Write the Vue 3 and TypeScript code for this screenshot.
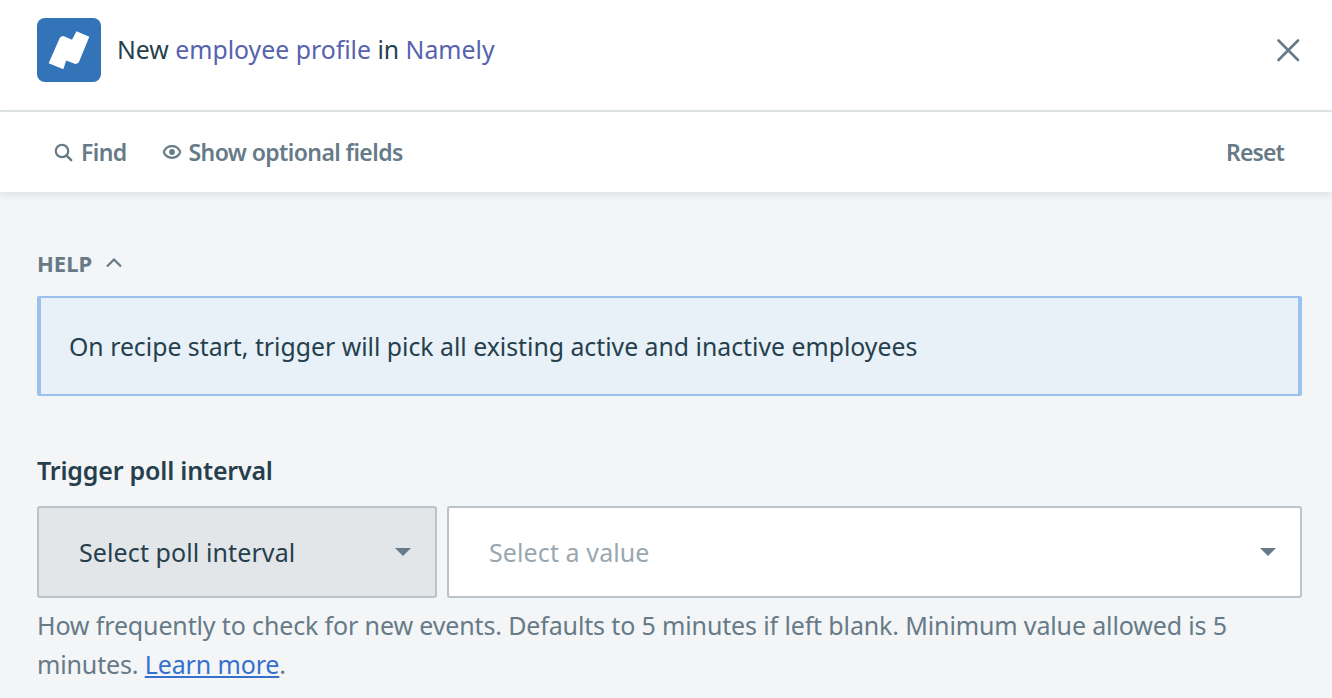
<template>
  <div class="panel">
    <header class="title-bar">
      <div class="logo">
        <svg width="64" height="64" viewBox="0 0 64 64">
          <path d="M39.5 13.3 L52.3 18.7 L42.2 43.5 Q41.7 44.9 40 45.5 Q38.5 46.2 37 45.6 L29.2 42.6 L26.3 51.3 L11.7 45.3 L22.6 20.3 Q23.3 18.7 25 18.2 Q26.2 17.8 27.5 18.4 L35 21.8 Z" fill="#fff" />
        </svg>
      </div>
      <h1 class="title">New <span class="accent">employee profile</span> in <span class="accent">Namely</span></h1>
      <button class="close" aria-label="Close">
        <svg width="24" height="24" viewBox="0 0 24 24">
          <path d="M2.5 2.5 L22 22 M22 2.5 L2.5 22" stroke="#667a88" stroke-width="2.6" stroke-linecap="round" />
        </svg>
      </button>
    </header>

    <div class="toolbar">
      <button class="tool">
        <svg width="19" height="19" viewBox="0 0 19 19">
          <circle cx="8" cy="8" r="6.2" fill="none" stroke="#667a88" stroke-width="2.2" />
          <path d="M12.6 12.6 L17.2 17.2" stroke="#667a88" stroke-width="2.4" stroke-linecap="round" />
        </svg>
        Find
      </button>
      <button class="tool">
        <svg width="18" height="14" viewBox="0 0 18 14">
          <path d="M9 1.2 C4.8 1.2 1.8 4.2 .6 7 C1.8 9.8 4.8 12.8 9 12.8 C13.2 12.8 16.2 9.8 17.4 7 C16.2 4.2 13.2 1.2 9 1.2 Z" fill="none" stroke="#667a88" stroke-width="2.2" />
          <circle cx="9" cy="7" r="2.9" fill="#667a88" />
        </svg>
        Show optional fields
      </button>
      <button class="tool reset">Reset</button>
    </div>

    <main class="content">
      <div class="help-head">
        <span>HELP</span>
        <svg width="16" height="10" viewBox="0 0 16 10">
          <path d="M1 8.5 L8 1.5 L15 8.5" fill="none" stroke="#667a88" stroke-width="2.2" />
        </svg>
      </div>
      <div class="help-box">{{ helpText }}</div>

      <label class="field-label">Trigger poll interval</label>
      <div class="selects">
        <div class="select mode">
          <span>Select poll interval</span>
          <i class="caret"></i>
        </div>
        <div class="select value">
          <span>Select a value</span>
          <i class="caret"></i>
        </div>
      </div>
      <p class="hint">
        How frequently to check for new events. Defaults to 5 minutes if left blank. Minimum value allowed is 5
        minutes. <a href="#">Learn more</a>.
      </p>
    </main>
  </div>
</template>

<script setup lang="ts">
const helpText = 'On recipe start, trigger will pick all existing active and inactive employees'
</script>

<style>
html,
body {
  margin: 0;
  background: #f3f5f7;
}
</style>

<style scoped>
.panel {
  width: 1332px;
  height: 698px;
  overflow: hidden;
  background: #f3f5f7;
  font-family: "Noto Sans", "Open Sans", sans-serif;
  color: #263f4d;
}

.title-bar {
  height: 100px;
  display: flex;
  align-items: center;
  padding: 0 32px 10px 37px;
  background: #fff;
  border-bottom: 2px solid #e3e7ea;
}

.logo {
  width: 64px;
  height: 64px;
  margin-right: 16px;
  border-radius: 8px;
  background: #3374b8;
}

.logo svg {
  display: block;
}

.title {
  flex: 1;
  margin: 0 0 2px;
  font-size: 24.8px;
  font-weight: 400;
}

.accent {
  color: #5762ae;
}

.close {
  display: flex;
  padding: 0;
  border: 0;
  background: none;
}

.toolbar {
  position: relative;
  height: 80px;
  display: flex;
  align-items: center;
  gap: 36px;
  padding: 0 48px 0 54px;
  background: #fff;
  box-shadow: 0 2px 8px rgba(38, 63, 77, 0.12);
}

.tool {
  display: flex;
  align-items: center;
  gap: 8px;
  padding: 0;
  border: 0;
  background: none;
  font: 600 23px "Noto Sans", sans-serif;
  letter-spacing: -0.6px;
  color: #667a88;
}

.reset {
  margin-left: auto;
  letter-spacing: -0.9px;
}

.content {
  padding: 57px 30px 0 37px;
}

.help-head {
  height: 28px;
  display: flex;
  align-items: center;
  gap: 14px;
  font-size: 22px;
  font-weight: 700;
  color: #667a88;
}

.help-box {
  height: 100px;
  box-sizing: border-box;
  display: flex;
  align-items: center;
  margin-top: 19px;
  padding-left: 28px;
  border: 2px solid #9bc2ee;
  border-left-width: 4px;
  border-right-width: 4px;
  border-radius: 2px;
  background: #e8f0f8;
  font-size: 24.8px;
}

.field-label {
  display: block;
  margin-top: 57px;
  font-size: 25px;
  line-height: 34px;
  font-weight: 600;
  letter-spacing: -0.2px;
}

.selects {
  display: flex;
  gap: 10px;
  margin-top: 19px;
}

.select {
  height: 92px;
  box-sizing: border-box;
  display: flex;
  align-items: center;
  justify-content: space-between;
  border: 2px solid #b9c3ca;
  border-radius: 3px;
  font-size: 25px;
  letter-spacing: 0.1px;
}

.mode {
  width: 400px;
  padding: 0 24px 0 40px;
  background: #e3e6e9;
}

.value {
  flex: 1;
  padding: 0 24px 0 40px;
  background: #fff;
  color: #9aa7b0;
}

.caret {
  width: 0;
  height: 0;
  border-left: 8px solid transparent;
  border-right: 8px solid transparent;
  border-top: 8px solid #667a88;
}

.hint {
  margin: 8px 0 0;
  font-size: 25px;
  line-height: 39px;
  letter-spacing: -0.14px;
  color: #667a88;
}

.hint a {
  color: #3570cc;
}
</style>
